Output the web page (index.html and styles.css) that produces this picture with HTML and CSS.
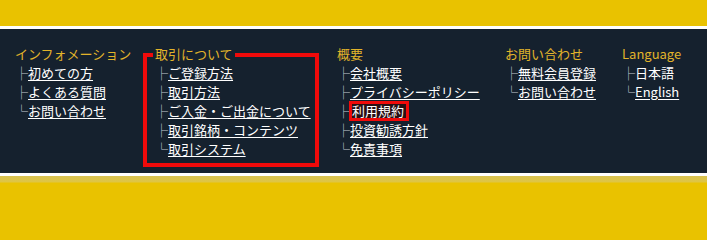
FILE: index.html
```html
<!DOCTYPE html>
<html lang="ja">
<head>
<meta charset="utf-8">
<title>Footer</title>
<link rel="stylesheet" href="styles.css">
</head>
<body>
<div class="band band-top"></div>
<footer class="site-footer">
  <nav class="cols">
    <div class="col col-info">
      <h3 class="col-title">インフォメーション</h3>
      <ul class="links">
        <li><span class="tree">├</span><a href="#">初めての方</a></li>
        <li><span class="tree">├</span><a href="#">よくある質問</a></li>
        <li><span class="tree">└</span><a href="#">お問い合わせ</a></li>
      </ul>
    </div>
    <div class="col col-trade">
      <h3 class="col-title col-title-boxed">取引について</h3>
      <ul class="links">
        <li><span class="tree">├</span><a href="#">ご登録方法</a></li>
        <li><span class="tree">├</span><a href="#">取引方法</a></li>
        <li><span class="tree">├</span><a href="#">ご入金・ご出金について</a></li>
        <li><span class="tree">├</span><a href="#">取引銘柄・コンテンツ</a></li>
        <li><span class="tree">└</span><a href="#">取引システム</a></li>
      </ul>
    </div>
    <div class="col col-about">
      <h3 class="col-title">概要</h3>
      <ul class="links">
        <li><span class="tree">├</span><a href="#">会社概要</a></li>
        <li><span class="tree">├</span><a href="#">プライバシーポリシー</a></li>
        <li><span class="tree">├</span><a href="#" class="marked">利用規約</a></li>
        <li><span class="tree">├</span><a href="#">投資勧誘方針</a></li>
        <li><span class="tree">└</span><a href="#">免責事項</a></li>
      </ul>
    </div>
    <div class="col col-contact">
      <h3 class="col-title">お問い合わせ</h3>
      <ul class="links">
        <li><span class="tree">├</span><a href="#">無料会員登録</a></li>
        <li><span class="tree">└</span><a href="#">お問い合わせ</a></li>
      </ul>
    </div>
    <div class="col col-lang">
      <h3 class="col-title">Language</h3>
      <ul class="links">
        <li><span class="tree">├</span><span class="current">日本語</span></li>
        <li><span class="tree">└</span><a href="#">English</a></li>
      </ul>
    </div>
  </nav>
</footer>
<div class="band band-bottom"></div>
</body>
</html>
```

FILE: styles.css
```css
html, body {
  margin: 0;
  padding: 0;
  background: #e9c200;
}

body {
  font-family: "Noto Sans CJK JP", "Noto Sans", sans-serif;
  font-size: 13px;
  line-height: 19px;
  color: #ffffff;
}

.band-top {
  height: 26px;
  background: #e9c200;
  border-bottom: 3px solid #ffffff;
}

.band-bottom {
  height: 34px;
  border-top: 3px solid #ffffff;
  background: linear-gradient(#d8c251 0, #dfc544 6px, #e9c200 7px, #e9c200 100%);
  box-sizing: border-box;
}

.site-footer {
  height: 144px;
  box-sizing: border-box;
  background: #15212e;
  padding: 15px 0 0 15px;
  overflow: hidden;
}

.cols {
  display: flex;
  align-items: flex-start;
}

.col-info { width: 128px; }
.col-trade {
  width: 176px;
  box-sizing: border-box;
  margin-top: 9px;
  margin-right: 18px;
  border: 4px solid #f00a0a;
  padding: 0 4px 5px 8px;
}
.col-about { width: 168px; }
.col-contact { width: 117px; }
.col-lang { width: 80px; }

.col-title {
  margin: 0;
  font-size: 13px;
  font-weight: normal;
  line-height: 19px;
  color: #e2b42a;
  white-space: nowrap;
}

.col-title-boxed {
  width: max-content;
  margin: -13px 0 0 -2px;
  padding: 0 2px;
  background: #15212e;
}

.links {
  list-style: none;
  margin: 0;
  padding: 0;
}

.links li {
  white-space: nowrap;
  height: 19px;
}

.tree {
  color: #c4cad1;
}

.links a {
  color: #ffffff;
  text-decoration: underline;
  text-underline-offset: 2px;
}

.links a.marked {
  display: inline-block;
  line-height: 14px;
  border: 3px solid #f00a0a;
  background: #2a1014;
  text-decoration: none;
  margin-left: -1px;
  padding: 0 2px 0 0;
}

.current {
  color: #ffffff;
}
```
